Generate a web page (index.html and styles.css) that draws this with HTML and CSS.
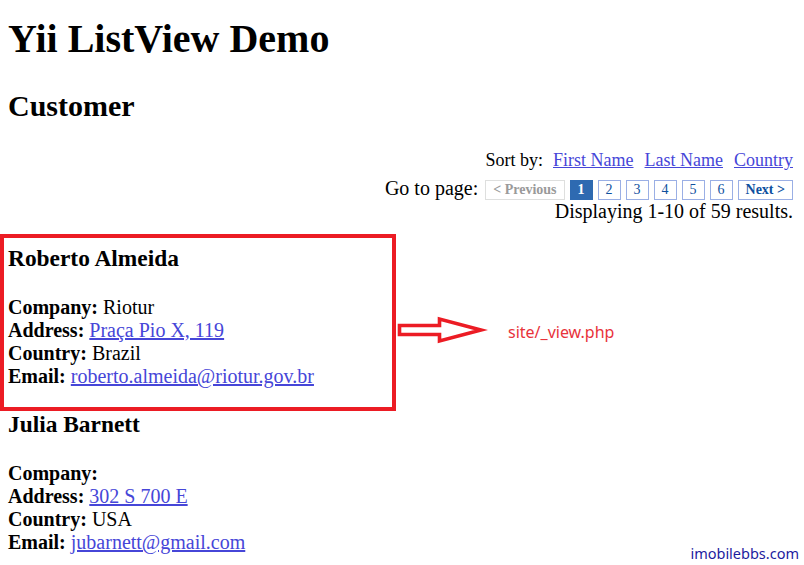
FILE: index.html
```html
<!DOCTYPE html>
<html>
<head>
<meta charset="utf-8">
<title>Yii ListView Demo</title>
<link rel="stylesheet" href="styles.css">
</head>
<body>
<div class="page">
  <h1 class="title">Yii ListView Demo</h1>
  <h2 class="subtitle">Customer</h2>
  <div class="list-view">
    <div class="sorter">
      <span class="sorter-label">Sort by:</span>
      <a href="#">First Name</a>
      <a href="#">Last Name</a>
      <a href="#">Country</a>
    </div>
    <div class="pager">
      <span class="pager-label">Go to page:</span>
      <ul class="yii-pager">
        <li class="btn hidden">&lt; Previous</li>
        <li class="btn selected">1</li>
        <li class="btn page">2</li>
        <li class="btn page">3</li>
        <li class="btn page">4</li>
        <li class="btn page">5</li>
        <li class="btn page">6</li>
        <li class="btn next">Next &gt;</li>
      </ul>
    </div>
    <div class="summary">Displaying 1-10 of 59 results.</div>
    <div class="items">
      <div class="view">
        <h3 class="name">Roberto Almeida</h3>
        <div class="line"><b>Company:</b> Riotur</div>
        <div class="line"><b>Address:</b> <a href="#">Praça Pio X, 119</a></div>
        <div class="line"><b>Country:</b> Brazil</div>
        <div class="line"><b>Email:</b> <a href="#">roberto.almeida@riotur.gov.br</a></div>
      </div>
      <div class="view">
        <h3 class="name">Julia Barnett</h3>
        <div class="line"><b>Company:</b></div>
        <div class="line"><b>Address:</b> <a href="#">302 S 700 E</a></div>
        <div class="line"><b>Country:</b> USA</div>
        <div class="line"><b>Email:</b> <a href="#">jubarnett@gmail.com</a></div>
      </div>
    </div>
  </div>
</div>

<div class="annot-box"></div>
<svg class="annot-arrow" width="92" height="32" viewBox="396 314 92 32">
  <polygon points="399.5,325.5 439.5,325.5 439.5,319 481,330 439.5,341 439.5,334.5 399.5,334.5" fill="#fff" stroke="#ec1c24" stroke-width="3.6" stroke-linejoin="miter"/>
</svg>
<div class="annot-label">site/_view.php</div>
<div class="watermark">imobilebbs.com</div>
</body>
</html>
```

FILE: styles.css
```css
html, body {
  margin: 0;
  padding: 0;
  background: #ffffff;
}

body {
  font-family: "Liberation Serif", "Times New Roman", serif;
  font-size: 20px;
  line-height: 23px;
  color: #000000;
  position: relative;
  min-height: 565px;
}

a {
  color: #4646d8;
  text-decoration: underline;
}

.page {
  padding: 0 11px 0 8px;
  overflow: hidden;
}

.title {
  font-size: 40px;
  line-height: 46px;
  font-weight: bold;
  margin: 16px 0 0;
}

.subtitle {
  font-size: 30px;
  line-height: 34px;
  font-weight: bold;
  margin: 27px 0 0;
}

.sorter {
  margin-top: 27px;
  font-size: 18px;
  line-height: 21px;
  display: flex;
  justify-content: flex-end;
  gap: 11px;
}

.sorter-label {
  margin-right: -1px;
}

.pager {
  margin-top: 6px;
  display: flex;
  justify-content: flex-end;
  align-items: flex-end;
  line-height: 22px;
  height: 22px;
}

.pager-label {
  margin-right: 7px;
}

.yii-pager {
  list-style: none;
  margin: 0 0 -1px;
  padding: 0;
  display: flex;
  gap: 5px;
  font-size: 14px;
  line-height: 16px;
}

.btn {
  border: 1px solid #9aafe5;
  color: #0e509e;
  padding: 1px 7px;
  font-weight: normal;
}

.btn.hidden {
  border-color: #dedfde;
  color: #9a9a9a;
  font-weight: bold;
}

.btn.selected {
  background: #2e6ab1;
  border-color: #2e6ab1;
  color: #ffffff;
  font-weight: bold;
}

.btn.next {
  font-weight: bold;
}

.summary {
  text-align: right;
  line-height: 23px;
  margin-top: 1px;
}

.items {
  padding-top: 22px;
}

.view + .view {
  margin-top: 23px;
}

.name {
  font-size: 23.4px;
  line-height: 27px;
  font-weight: bold;
  margin: 0 0 24px;
}

.line {
  line-height: 23px;
  height: 23px;
}

.annot-box {
  position: absolute;
  left: 0;
  top: 234px;
  width: 388px;
  height: 169px;
  border: 4px solid #ec1c24;
}

.annot-arrow {
  position: absolute;
  left: 396px;
  top: 314px;
}

.annot-label {
  position: absolute;
  left: 508px;
  top: 321px;
  font-family: "Noto Sans", "Open Sans", sans-serif;
  font-size: 16px;
  line-height: 22px;
  color: #e8333b;
}

.watermark {
  position: absolute;
  right: 5px;
  top: 543px;
  font-family: "Noto Sans", "Open Sans", sans-serif;
  font-size: 14.5px;
  line-height: 20px;
  color: #1c1c9e;
}
```
